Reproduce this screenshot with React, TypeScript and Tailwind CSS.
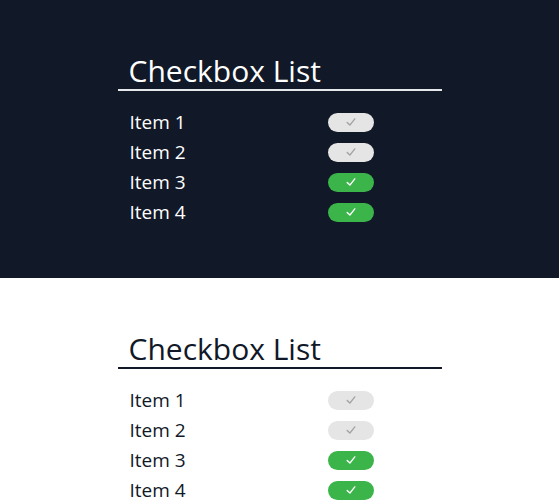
const items = [
  { label: 'Item 1', checked: false },
  { label: 'Item 2', checked: false },
  { label: 'Item 3', checked: true },
  { label: 'Item 4', checked: true },
];

function Check({ className }: { className: string }) {
  return (
    <svg viewBox="0 0 12 12" className={className} fill="none" stroke="currentColor" strokeWidth="1.4" strokeLinecap="round" strokeLinejoin="round">
      <path d="M2.2 6.4 4.9 9.1 9.8 2.9" />
    </svg>
  );
}

function CheckboxList({ dark }: { dark: boolean }) {
  return (
    <div className={dark ? 'h-[278px] bg-[#111827] pt-[54px]' : 'h-[278px] bg-white pt-[54px]'}>
      <div className="mx-auto w-[324px]">
        <h2
          className={`border-b-2 pl-[11px] pb-[1px] text-[30px] leading-[34px] ${
            dark ? 'border-[#e5e7eb] text-white' : 'border-[#111827] text-[#111827]'
          }`}
        >
          Checkbox List
        </h2>
        <ul className="mt-[16px]">
          {items.map((item) => (
            <li key={item.label} className="flex h-[30px] items-center pl-[12px]">
              <span className={`w-[198px] text-[19px] ${dark ? 'text-white' : 'text-[#111827]'}`}>{item.label}</span>
              <span
                className={`flex h-[19px] w-[46px] items-center justify-center rounded-full ${
                  item.checked ? 'bg-[#3bb54a] text-white' : 'bg-[#e5e5e5] text-[#a3a3a3]'
                }`}
              >
                <Check className="h-[12px] w-[12px]" />
              </span>
            </li>
          ))}
        </ul>
      </div>
    </div>
  );
}

export default function App() {
  return (
    <div className="h-[500px] overflow-hidden font-['Open_Sans',sans-serif]">
      <CheckboxList dark />
      <CheckboxList dark={false} />
    </div>
  );
}
